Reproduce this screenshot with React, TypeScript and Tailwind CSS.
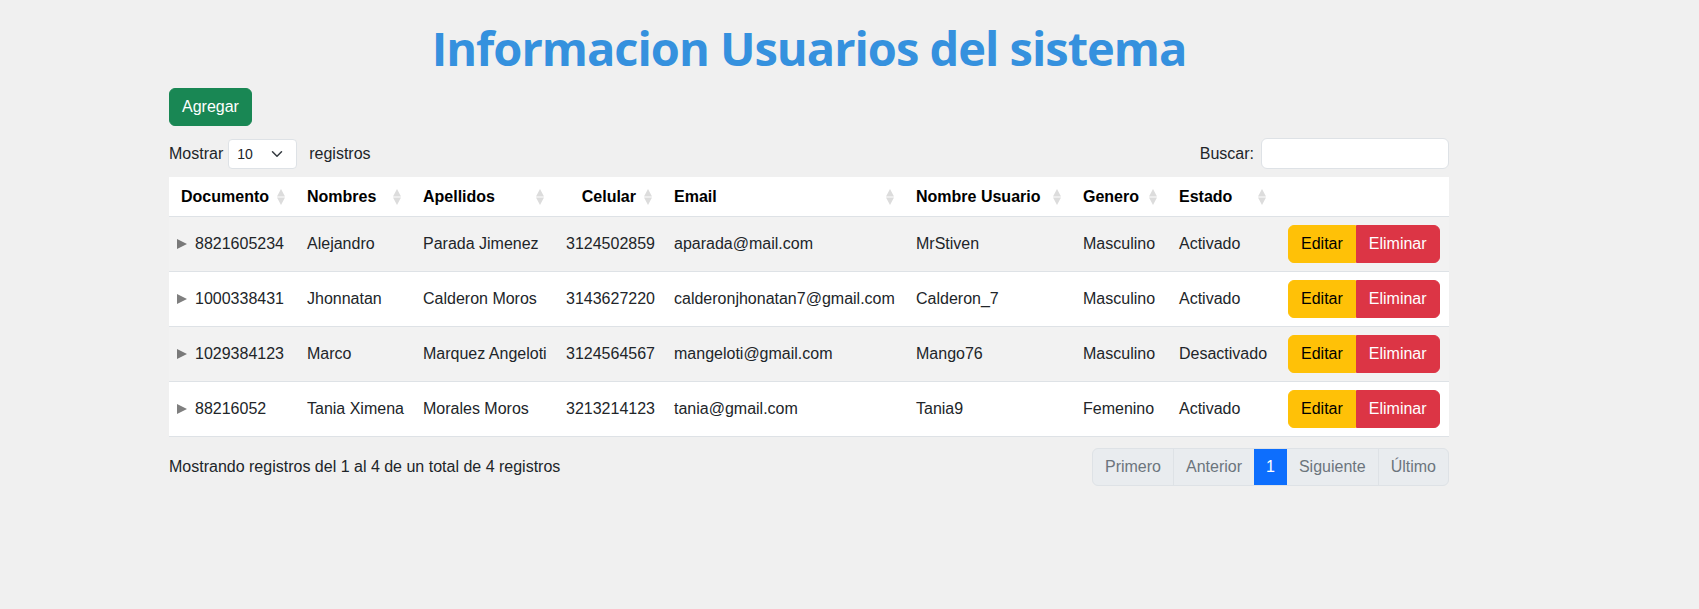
import React from "react";

type Row = {
  doc: string;
  nombres: string;
  apellidos: string;
  celular: string;
  email: string;
  usuario: string;
  genero: string;
  estado: string;
};

const rows: Row[] = [
  { doc: "8821605234", nombres: "Alejandro", apellidos: "Parada Jimenez", celular: "3124502859", email: "aparada@mail.com", usuario: "MrStiven", genero: "Masculino", estado: "Activado" },
  { doc: "1000338431", nombres: "Jhonnatan", apellidos: "Calderon Moros", celular: "3143627220", email: "calderonjhonatan7@gmail.com", usuario: "Calderon_7", genero: "Masculino", estado: "Activado" },
  { doc: "1029384123", nombres: "Marco", apellidos: "Marquez Angeloti", celular: "3124564567", email: "mangeloti@gmail.com", usuario: "Mango76", genero: "Masculino", estado: "Desactivado" },
  { doc: "88216052", nombres: "Tania Ximena", apellidos: "Morales Moros", celular: "3213214123", email: "tania@gmail.com", usuario: "Tania9", genero: "Femenino", estado: "Activado" },
];

const GRID = "grid grid-cols-[130px_116px_143px_108px_242px_167px_96px_109px_169px]";

function SortIcon() {
  return (
    <svg width="8" height="16" viewBox="0 0 8 16" className="absolute right-[14px] top-1/2 -translate-y-1/2">
      <polygon points="4,0 8,7.4 0,7.4" fill="#dcdcdc" />
      <polygon points="0,8.6 8,8.6 4,16" fill="#dcdcdc" />
    </svg>
  );
}

function Th({ label, right, first, sort = true }: { label: string; right?: boolean; first?: boolean; sort?: boolean }) {
  return (
    <div className={`relative h-full flex items-center ${first ? "pl-3" : "pl-2"} pr-[30px] font-bold ${right ? "justify-end" : ""}`}>
      <span>{label}</span>
      {sort && <SortIcon />}
    </div>
  );
}

export default function App() {
  return (
    <div
      className="min-h-[609px] w-full bg-[#f0f0f0] text-[#212529] text-[16px] leading-6"
      style={{ fontFamily: '"Liberation Sans", Arial, sans-serif' }}
    >
      <div className="ml-[169px] w-[1280px] pt-[19px]">
        <h1
          className="text-center text-[47px] leading-[58px] font-bold text-[#3591de] tracking-[-1px]"
          style={{ fontFamily: '"Open Sans", "Noto Sans", sans-serif' }}
        >
          Informacion Usuarios del sistema
        </h1>

        <div className="mt-[11px]">
          <button className="h-[38px] px-3 rounded-[6px] bg-[#198754] text-white border border-[#198754]">
            Agregar
          </button>
        </div>

        <div className="mt-[12px] h-[31px] flex items-center justify-between">
          <div className="flex items-center">
            <span>Mostrar</span>
            <div className="relative ml-[5px] w-[69px] h-[30px] bg-white border border-[#dee2e6] rounded-[4px] flex items-center pl-[8px] text-[14px]">
              10
              <svg width="12" height="12" viewBox="0 0 16 16" className="absolute right-[13px] top-1/2 -translate-y-1/2">
                <path d="m2 5 6 6 6-6" fill="none" stroke="#343a40" strokeWidth="2" strokeLinecap="round" strokeLinejoin="round" />
              </svg>
            </div>
            <span className="ml-[12px]">registros</span>
          </div>
          <div className="flex items-center">
            <span>Buscar:</span>
            <div className="ml-[7px] w-[188px] h-[31px] bg-white border border-[#dee2e6] rounded-[6px]" />
          </div>
        </div>

        <div className="mt-[8px]">
          <div className={`${GRID} h-[40px] bg-white border-b border-[#dee2e6] text-black`}>
            <Th label="Documento" first />
            <Th label="Nombres" />
            <Th label="Apellidos" />
            <Th label="Celular" right />
            <Th label="Email" />
            <Th label="Nombre Usuario" />
            <Th label="Genero" />
            <Th label="Estado" />
            <div />
          </div>
          {rows.map((r, i) => (
            <div
              key={r.doc}
              className={`${GRID} h-[55px] items-center border-b border-[#dee2e6] ${i % 2 === 0 ? "bg-[#f2f2f2]" : "bg-white"}`}
            >
              <div className="px-2 flex items-center whitespace-nowrap">
                <span className="inline-block w-0 h-0 border-y-[5px] border-y-transparent border-l-[10px] border-l-[rgba(0,0,0,0.5)] mr-2" />
                {r.doc}
              </div>
              <div className="px-2 whitespace-nowrap">{r.nombres}</div>
              <div className="px-2 whitespace-nowrap">{r.apellidos}</div>
              <div className="px-2 whitespace-nowrap">{r.celular}</div>
              <div className="px-2 whitespace-nowrap">{r.email}</div>
              <div className="px-2 whitespace-nowrap">{r.usuario}</div>
              <div className="px-2 whitespace-nowrap">{r.genero}</div>
              <div className="px-2 whitespace-nowrap">{r.estado}</div>
              <div className="px-2 flex">
                <button className="h-[38px] px-3 bg-[#ffc107] border border-[#ffc107] text-black rounded-l-[6px]">Editar</button>
                <button className="h-[38px] px-3 bg-[#dc3545] border border-[#dc3545] text-white rounded-r-[6px]">Eliminar</button>
              </div>
            </div>
          ))}
        </div>

        <div className="mt-[11px] flex items-center justify-between">
          <span>Mostrando registros del 1 al 4 de un total de 4 registros</span>
          <div className="flex h-[38px] border border-[#dee2e6] rounded-[6px] overflow-hidden bg-[#e9ecef] text-[#6c757d]">
            <div className="px-3 flex items-center">Primero</div>
            <div className="px-3 flex items-center border-l border-[#dee2e6]">Anterior</div>
            <div className="px-3 flex items-center bg-[#0d6efd] text-white">1</div>
            <div className="px-3 flex items-center">Siguiente</div>
            <div className="px-3 flex items-center border-l border-[#dee2e6]">Último</div>
          </div>
        </div>
      </div>
    </div>
  );
}
